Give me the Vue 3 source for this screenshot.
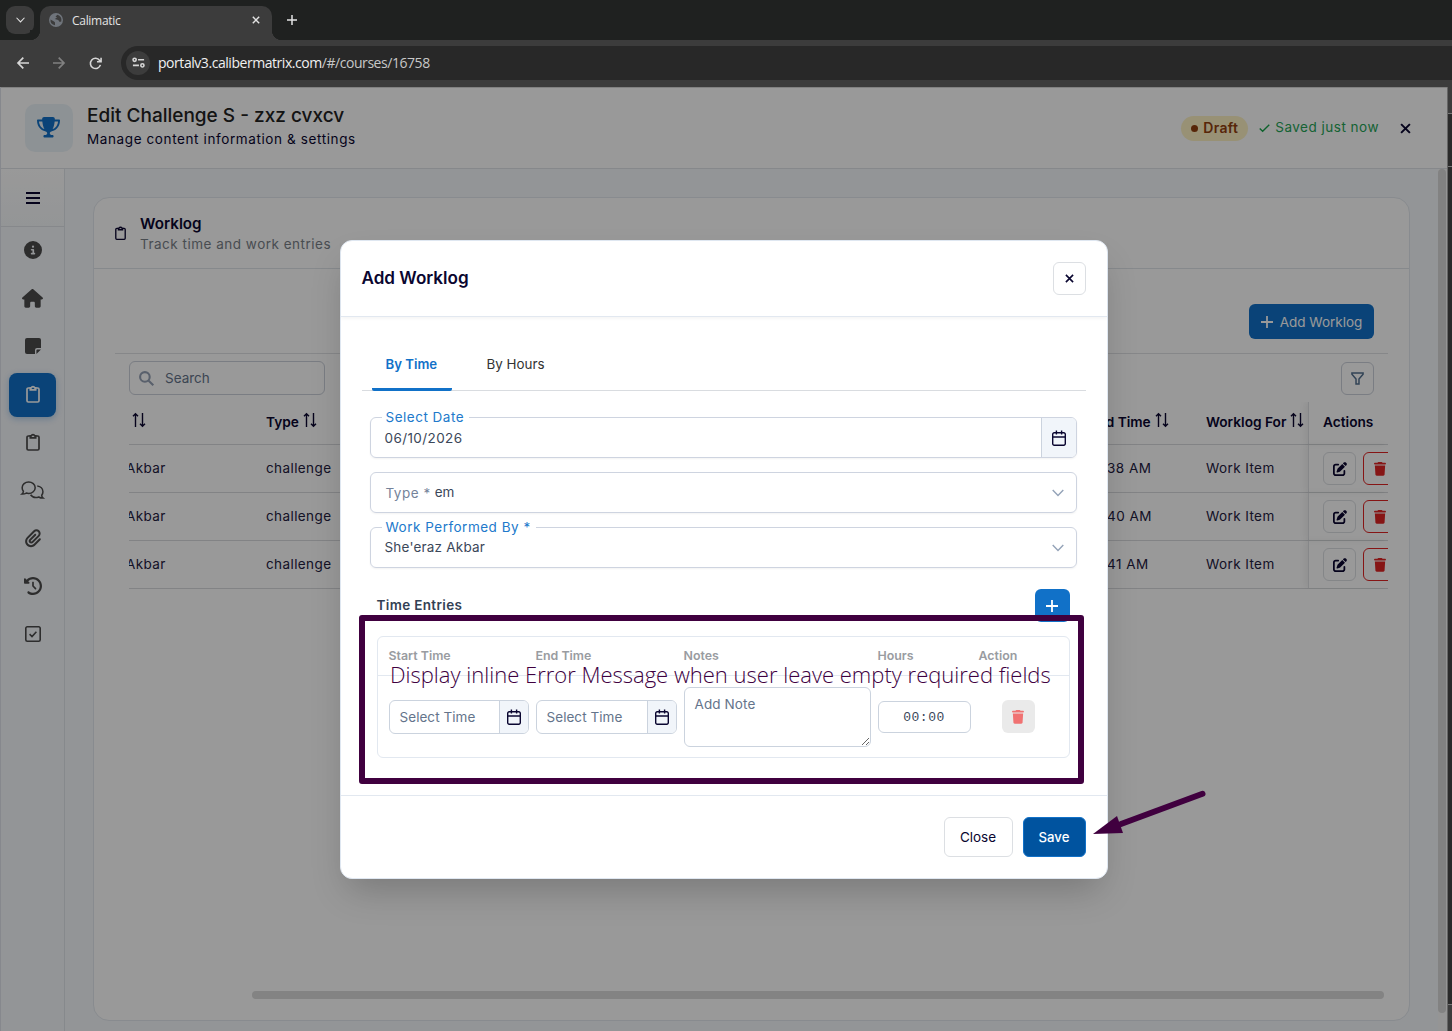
<script setup>
import { h, ref } from "vue";

// each icon: viewBox, path, optional stroke width (filled when missing)
const icons = {
  trophy: ["0 0 576 512", "M400 0H176c-26.5 0-48.1 21.8-47.1 48.2.2 5.3.4 10.6.7 15.8H24C10.7 64 0 74.7 0 88c0 92.6 33.5 157 78.5 200.7 44.3 43.1 98.3 64.8 138.1 75.8 23.4 6.5 39.4 26 39.4 45.6 0 20.9-17 37.9-37.9 37.9H192c-17.7 0-32 14.3-32 32s14.3 32 32 32H384c17.7 0 32-14.3 32-32s-14.3-32-32-32H357.9C337 448 320 431 320 410.1c0-19.6 15.9-39.2 39.4-45.6 39.9-11 93.9-32.7 138.2-75.8C542.5 245 576 180.6 576 88c0-13.3-10.7-24-24-24H446.4c.3-5.2.5-10.4.7-15.8C448.1 21.8 426.5 0 400 0zM48.9 112h84.4c9.1 90.1 29.2 150.3 51.9 190.6-24.9-11-50.8-26.5-73.2-48.3-32-31.1-58-76-63-142.3zM464.1 254.3c-22.4 21.8-48.3 37.3-73.2 48.3 22.7-40.3 42.8-100.5 51.9-190.6h84.4c-5.1 66.3-31.1 111.2-63 142.3z"],
  info: ["0 0 512 512", "M256 512A256 256 0 1 0 256 0a256 256 0 1 0 0 512zM216 336h24V272H216c-13.3 0-24-10.7-24-24s10.7-24 24-24h48c13.3 0 24 10.7 24 24v88h8c13.3 0 24 10.7 24 24s-10.7 24-24 24H216c-13.3 0-24-10.7-24-24s10.7-24 24-24zm40-208a32 32 0 1 1 0 64 32 32 0 1 1 0-64z"],
  home: ["0 0 576 512", "M575.8 255.5c0 18-15 32.1-32 32.1h-32l.7 160.2c0 2.7-.2 5.4-.5 8.1V472c0 22.1-17.9 40-40 40H392c-22.1 0-40-17.9-40-40V384c0-17.7-14.3-32-32-32H256c-17.7 0-32 14.3-32 32v88c0 22.1-17.9 40-40 40H104c-22.1 0-40-17.9-40-40V287.6H32c-18 0-32-14-32-32.1 0-9 3-17 10-24L266.4 8c7-7 15-8 22-8s15 2 21 7L564.8 231.5c8 7 12 15 11 24z"],
  note: ["0 0 16 16", "M2 0h12a2 2 0 0 1 2 2v8h-4a2 2 0 0 0-2 2v4H2a2 2 0 0 1-2-2V2a2 2 0 0 1 2-2zM16 11.4 11.4 16v-3.6a1 1 0 0 1 1-1z"],
  clipboard: ["0 0 14 18", "M4 3H2.3A1.3 1.3 0 0 0 1 4.3v11.4A1.3 1.3 0 0 0 2.3 17h9.4a1.3 1.3 0 0 0 1.3-1.3V4.3A1.3 1.3 0 0 0 11.7 3H10M4.3 2.8h1a1.8 1.8 0 0 1 3.4 0h1v2H4.3z", 1.7],
  chat: ["0 0 24 19", "M1 13.6c1-.8 1.5-1.8 1.5-2.9A6 6 0 0 1 1.2 7C1.2 3.7 4.3 1 8 1s6.8 2.7 6.8 6S11.7 13 8 13c-.9 0-1.7-.1-2.5-.4-1.3.8-2.8 1.1-4.500 1zM17 5.300c3.300.3 5.900 2.800 5.900 5.900 0 1.400-.5 2.600-1.300 3.600 0 1.200.5 2.200 1.500 3-1.700.1-3.200-.3-4.600-1.100-3.300 1.100-6.900 0-8.500-2.300", 1.6],
  clip: ["0 0 448 512", "M364.2 83.8c-24.4-24.4-64-24.4-88.4 0l-184 184c-42.1 42.1-42.1 110.3 0 152.4s110.3 42.1 152.4 0l152-152c10.9-10.9 28.7-10.9 39.6 0s10.9 28.7 0 39.6l-152 152c-64 64-167.6 64-231.6 0s-64-167.6 0-231.6l184-184c46.3-46.3 121.3-46.3 167.6 0s46.3 121.3 0 167.6l-176 176c-28.6 28.6-75 28.6-103.6 0s-28.6-75 0-103.6l144-144c10.9-10.9 28.7-10.9 39.6 0s10.9 28.7 0 39.6l-144 144c-6.7 6.7-6.7 17.7 0 24.4s17.7 6.7 24.4 0l176-176c24.4-24.4 24.4-64 0-88.4z"],
  history: ["0 0 512 512", "M75 75L41 41C25.9 25.9 0 36.6 0 57.9V168c0 13.3 10.7 24 24 24H134.1c21.4 0 32.1-25.9 17-41l-30.8-30.8C155 85.5 203 64 256 64c106 0 192 86 192 192s-86 192-192 192c-40.8 0-78.6-12.7-109.7-34.4-14.5-10.1-34.4-6.6-44.6 7.9s-6.6 34.4 7.9 44.6C151.2 495 201.7 512 256 512c141.4 0 256-114.6 256-256S397.4 0 256 0C185.3 0 121.3 28.7 75 75zm181 53c-13.3 0-24 10.7-24 24V256c0 6.4 2.5 12.5 7 17l72 72c9.4 9.4 24.6 9.4 33.9 0s9.4-24.6 0-33.9l-65-65V152c0-13.3-10.7-24-24-24z"],
  check: ["0 0 16 16", "M2.3.8h11.4a1.5 1.5 0 0 1 1.5 1.5v11.4a1.5 1.5 0 0 1-1.5 1.5H2.3a1.5 1.5 0 0 1-1.5-1.5V2.3A1.5 1.5 0 0 1 2.3.8zM4.6 8.2 7 10.5l4.4-4.7", 1.6],
  trash: ["0 0 448 512", "M135.2 17.7L128 32H32C14.3 32 0 46.3 0 64S14.3 96 32 96H416c17.7 0 32-14.3 32-32s-14.3-32-32-32H320l-7.2-14.3C307.4 6.8 296.3 0 284.2 0H163.8c-12.1 0-23.2 6.8-28.6 17.7zM416 128H32L53.2 467c1.6 25.3 22.6 45 47.9 45H346.9c25.3 0 46.3-19.7 47.9-45L416 128z"],
  edit: ["0 0 512 512", "M471.6 21.7c-21.9-21.9-57.3-21.9-79.2 0L362.3 51.7l97.9 97.9 30.1-30.1c21.9-21.9 21.9-57.3 0-79.2L471.6 21.7zm-299.2 220c-6.1 6.1-10.8 13.6-13.5 21.9l-29.6 88.8c-2.9 8.6-.6 18.1 5.8 24.6s15.9 8.7 24.6 5.8l88.8-29.6c8.2-2.7 15.7-7.4 21.9-13.5L437.7 172.3 339.7 74.3 172.4 241.7zM96 64C43 64 0 107 0 160V416c0 53 43 96 96 96H352c53 0 96-43 96-96V320c0-17.7-14.3-32-32-32s-32 14.3-32 32v96c0 17.7-14.3 32-32 32H96c-17.7 0-32-14.3-32-32V160c0-17.7 14.3-32 32-32h96c17.7 0 32-14.3 32-32s-14.3-32-32-32H96z"],
  calendar: ["0 0 14 16", "M2.2 2.7h9.6A1.5 1.5 0 0 1 13.3 4.2v9.6a1.5 1.5 0 0 1-1.5 1.5H2.2a1.5 1.5 0 0 1-1.5-1.5V4.2a1.5 1.5 0 0 1 1.5-1.5zM.7 7h12.6M4.4.5v4M9.6.5v4", 1.4],
  sort: ["0 0 14 14", "M3.5 14V.8M1 3.2 3.5.7 6 3.2M10.5 0v13.2M8 10.8l2.5 2.5 2.5-2.5", 1.4],
  down: ["0 0 12 8", "M.7 1 6 6.6 11.3 1", 1.4],
  close: ["0 0 10 10", "M1 1l8 8M9 1 1 9", 1.8],
  plus: ["0 0 12 12", "M6 0v12M0 6h12", 1.8],
  search: ["0 0 15 15", "M10.7 5.9a4.8 4.8 0 1 1-9.6 0 4.8 4.8 0 0 1 9.6 0zM9.4 9.4 14.3 14.3", 2.1],
  filter: ["0 0 14 14", "M1 1h12v1.4L8.6 7.6V13H5.4V7.6L1 2.4z", 1.6],
  menu: ["0 0 14 12", "M0 1h14M0 6h14M0 11h14", 2],
  tick: ["0 0 12 9", "M.8 4.8 4 8 11.2.8", 1.5],
  back: ["0 0 12 12", "M12 6H1M6.3.7 1 6l5.3 5.3", 1.7],
  forward: ["0 0 12 12", "M0 6h11M5.7.7 11 6l-5.3 5.3", 1.7],
  reload: ["0 0 14 14", "M12.3 8.5A5.5 5.5 0 1 1 11.5 3.7L13 5.2M13 .8v4.4H8.6", 1.7],
  tune: ["0 0 14 12", "M4.5 3a1.7 1.7 0 1 1-3.4 0 1.7 1.7 0 0 1 3.4 0zM6.5 3H13M12.9 9a1.7 1.7 0 1 1-3.4 0 1.7 1.7 0 0 1 3.4 0zM1 9h6.5", 1.7],
  globe: ["0 0 14 14", "M7 0a7 7 0 1 0 0 14A7 7 0 0 0 7 0zM1.5 6.5 5 8.5l1 1v2.8A5.5 5.5 0 0 1 1.5 6.5zM8.5 1.8l-2 1.7 1.5 1L5.8 6l3.4 1 1.5 2 1.6-.5A5.5 5.5 0 0 0 8.5 1.8z"],
};

const Icon = (props) => {
  const [viewBox, d, stroke] = icons[props.name];
  return h("svg", { viewBox, class: "icon" }, [
    h("path", {
      d,
      fill: stroke ? "none" : "currentColor",
      "fill-rule": "evenodd",
      stroke: stroke ? "currentColor" : "none",
      "stroke-width": stroke,
    }),
  ]);
};
Icon.props = ["name"];

const menu = ["info", "home", "note", "clipboard", "clipboard", "chat", "clip", "history", "check"];
const active = ref(3);
const tab = ref("By Time");
const times = ["38 AM", "40 AM", "41 AM"];
</script>

<template>
  <div class="window">
    <div class="tabstrip">
      <span class="tab_search"><Icon name="down" /></span>
      <div class="tab">
        <Icon name="globe" class="globe" />
        <span>Calimatic</span>
        <Icon name="close" class="tab_close" />
      </div>
      <Icon name="plus" class="tab_new" />
    </div>
    <div class="toolbar">
      <Icon name="back" class="nav" />
      <Icon name="forward" class="nav dim" />
      <Icon name="reload" class="nav reload" />
      <div class="omnibox">
        <span class="tune"><Icon name="tune" /></span>
        <span class="url">portalv3.calibermatrix.com<i>/#/courses/16758</i></span>
      </div>
    </div>

    <div class="viewport">
      <div class="page">
        <header>
          <span class="trophy"><Icon name="trophy" /></span>
          <div class="heading">
            <h1>Edit Challenge S - zxz cvxcv</h1>
            <p>Manage content information &amp; settings</p>
          </div>
          <span class="draft"><b></b>Draft</span>
          <Icon name="tick" class="tick" />
          <span class="saved">Saved just now</span>
          <Icon name="close" class="header_close" />
        </header>

        <div class="content">
          <nav>
            <div class="burger"><Icon name="menu" /></div>
            <div v-for="(name, i) in menu" :key="i" class="item" :class="{ active: i === active }" @click="active = i">
              <Icon :name="name" :class="name" />
            </div>
          </nav>

          <main>
            <section class="card">
              <div class="card_head">
                <Icon name="clipboard" />
                <div>
                  <h2>Worklog</h2>
                  <p>Track time and work entries</p>
                </div>
              </div>
              <div class="card_actions">
                <button class="btn_add"><Icon name="plus" />Add Worklog</button>
              </div>
              <div class="filters">
                <div class="search"><Icon name="search" />Search</div>
                <button class="btn_filter"><Icon name="filter" /></button>
              </div>
              <div class="grid">
                <div class="row head">
                  <span class="first"><Icon name="sort" /></span>
                  <span>Type<Icon name="sort" /></span>
                  <span>End Time<Icon name="sort" /></span>
                  <span>Worklog For<Icon name="sort" /></span>
                  <span class="sticky">Actions</span>
                </div>
                <div class="row" v-for="time in times" :key="time">
                  <span class="name">Akbar</span>
                  <span>challenge</span>
                  <span class="time">{{ time }}</span>
                  <span>Work Item</span>
                  <span class="sticky">
                    <button class="btn_row"><Icon name="edit" /></button>
                    <button class="btn_row delete"><Icon name="trash" /></button>
                  </span>
                </div>
              </div>
              <div class="hscroll"></div>
            </section>
          </main>
          <div class="vscroll"><span></span></div>
        </div>

        <div class="overlay">
          <div class="modal">
            <div class="modal_head">
              <h3>Add Worklog</h3>
              <button class="btn_close"><Icon name="close" /></button>
            </div>
            <div class="tabs">
              <span v-for="name in ['By Time', 'By Hours']" :key="name" :class="{ selected: tab === name }" @click="tab = name">{{ name }}</span>
            </div>
            <div class="fields">
              <div class="field">
                <label>Select Date</label>
                <span class="value">06/10/2026</span>
                <span class="addon"><Icon name="calendar" /></span>
              </div>
              <div class="field select">
                <span class="inner_label">Type *</span><span class="cut">em</span>
                <Icon name="down" />
              </div>
              <div class="field select">
                <label>Work Performed By *</label>
                <span class="value person">She'eraz Akbar</span>
                <Icon name="down" />
              </div>
            </div>
            <div class="entries_head">
              <h4>Time Entries</h4>
              <button><Icon name="plus" /></button>
            </div>
            <div class="entries">
              <div class="cols titles">
                <span>Start Time</span><span>End Time</span><span>Notes</span><span>Hours</span><span>Action</span>
              </div>
              <div class="cols inputs">
                <div v-for="n in 2" :key="n" class="time_input">
                  <span>Select Time</span>
                  <b><Icon name="calendar" /></b>
                </div>
                <textarea placeholder="Add Note"></textarea>
                <div class="hours">00:00</div>
                <button class="btn_trash"><Icon name="trash" /></button>
              </div>
            </div>
            <div class="modal_foot">
              <button>Close</button>
              <button class="save">Save</button>
            </div>
          </div>
        </div>
      </div>
      <div class="edge"><i></i><i></i><i></i><i></i></div>
    </div>

    <!-- review marks drawn over the dialog -->
    <div class="mark_box"></div>
    <div class="mark_text">Display inline Error Message when user leave empty required fields</div>
    <svg class="mark_arrow" viewBox="0 0 116 46">
      <path d="M111.5 5.8 30 36" stroke="#40003f" stroke-width="6" stroke-linecap="round" />
      <path d="M2 46 26 28l6 17z" fill="#40003f" />
    </svg>
  </div>
</template>

<style>
body {
  margin: 0;
  overflow: hidden;
}
</style>

<style scoped>
* {
  box-sizing: border-box;
  margin: 0;
}

.window {
  position: relative;
  display: flex;
  flex-direction: column;
  width: 1452px;
  height: 1031px;
  overflow: hidden;
  font-family: Inter, "Open Sans", sans-serif;
  font-size: 13.5px;
  letter-spacing: 0.4px;
  line-height: 18px;
  color: #0a0630;
}

button {
  display: flex;
  align-items: center;
  justify-content: center;
  padding: 0;
  font: inherit;
  letter-spacing: 0;
  color: inherit;
  background: none;
  border: 1px solid #dcdfe3;
  border-radius: 6px;
}

.icon {
  display: block;
  flex: none;
  overflow: visible;
}

/* browser */
.tabstrip {
  display: flex;
  align-items: center;
  height: 40px;
  padding-left: 6px;
  background: #1f2120;
  color: #e3e3e3;
  font: 12px "Open Sans", sans-serif;
  letter-spacing: -0.3px;
}

.tab_search {
  display: grid;
  place-items: center;
  width: 28px;
  height: 28px;
  border-radius: 9px;
  background: #3c3c3c;
}

.tab_search .icon {
  width: 9px;
  stroke: #e3e3e3;
  stroke-width: 1;
}

.tab {
  position: relative;
  display: flex;
  align-items: center;
  align-self: flex-end;
  width: 232px;
  height: 34px;
  margin-left: 6px;
  padding: 0 12px 6px 9px;
  border-radius: 10px 10px 0 0;
  background: #3c3c3c;
}

.tab::before,
.tab::after {
  content: "";
  position: absolute;
  bottom: 0;
  left: -10px;
  width: 10px;
  height: 10px;
  background: radial-gradient(circle at 0 0, #1f2120 10px, #3c3c3c 10.5px);
}

.tab::after {
  left: auto;
  right: -10px;
  background: radial-gradient(circle at 100% 0, #1f2120 10px, #3c3c3c 10.5px);
}

.globe {
  width: 14px;
  margin-right: 9px;
  color: #6f747b;
}

.tab_close {
  width: 8px;
  margin-left: auto;
}

.tab_new {
  width: 10px;
  margin-left: 15px;
}

.toolbar {
  display: flex;
  align-items: center;
  height: 47px;
  padding-left: 17px;
  padding-bottom: 1px;
  background: #3c3c3c;
  color: #d6d6d6;
}

.nav {
  width: 12px;
  margin-right: 24px;
}

.dim {
  color: #808080;
}

.reload {
  width: 13px;
  margin-right: 19px;
}

.omnibox {
  display: flex;
  align-items: center;
  flex: 1;
  height: 34px;
  padding-left: 5px;
  border-radius: 17px 0 0 17px;
  background: #282828;
}

.tune {
  display: grid;
  place-items: center;
  width: 24px;
  height: 24px;
  margin-right: 8px;
  border-radius: 50%;
  background: #3c3c3c;
}

.tune .icon {
  width: 13px;
}

.url {
  padding-bottom: 1px;
  font: 14px "Open Sans", sans-serif;
  letter-spacing: -0.45px;
  color: #f0f0f0;
}

.url i {
  font-style: normal;
  color: #c7c7c7;
}

/* page */
.viewport {
  display: flex;
  flex: 1;
  min-height: 0;
}

.page {
  position: relative;
  display: flex;
  flex: none;
  flex-direction: column;
  width: 1447px;
  border-left: 1px solid #dfe3ec;
  background: #fff;
}

.edge {
  display: flex;
  flex-direction: column;
  flex: 1;
  background: #2a2a2a;
  border-left: 1px solid #666;
}

.edge i {
  flex: none;
  height: 53px;
  border-bottom: 1px solid #777;
}

.edge i:first-child {
  height: 27px;
  background: #3c3c3c;
}

.edge i:nth-child(3) {
  height: 838px;
}

.edge i:last-child {
  flex: 1;
  border: 0;
  background: #3c3c3c;
}

header {
  display: flex;
  align-items: center;
  height: 82px;
  padding: 0 36px 0 24px;
  border-top: 1px solid #d8d8d8;
  border-bottom: 1px solid #dfe3e8;
}

.trophy {
  display: grid;
  place-items: center;
  width: 48px;
  height: 48px;
  margin-right: 14px;
  padding: 0 1px 2px 0;
  border-radius: 10px;
  background: #ecf4f9;
  color: #1171c8;
}

.trophy .icon {
  width: 23px;
}

.heading {
  flex: 1;
  padding-bottom: 4px;
}

h1 {
  font-size: 19px;
  font-weight: 500;
  line-height: 26px;
  letter-spacing: 0;
  color: #222;
}

.heading p {
  line-height: 20px;
  letter-spacing: 0.61px;
}

.draft {
  display: flex;
  align-items: center;
  gap: 5px;
  height: 25px;
  padding: 0 10px 0 10px;
  border-radius: 13px;
  background: #fdf2c4;
  color: #92400e;
  font-size: 14px;
  font-weight: 600;
  letter-spacing: 0.3px;
}

.draft b {
  width: 7px;
  height: 7px;
  border-radius: 50%;
  background: currentColor;
}

.tick {
  width: 11px;
  margin: 0 5px 0 11px;
  color: #16a34a;
}

.saved {
  padding-bottom: 2px;
  letter-spacing: 0.5px;
  color: #25a557;
}

.header_close {
  width: 11px;
  margin-left: 21px;
}

.content {
  display: flex;
  flex: 1;
  min-height: 0;
  background: #f5f8fc;
}

nav {
  flex: none;
  width: 64px;
  border-right: 1px solid #e0e4e9;
}

.burger {
  display: grid;
  place-items: center;
  height: 58px;
  margin-bottom: 2px;
  border-bottom: 1px solid #dfe3e8;
  background: linear-gradient(#fff, #f6f9fb);
}

.burger .icon {
  width: 14px;
}

.item {
  display: grid;
  place-items: center;
  width: 47px;
  height: 44px;
  margin: 0 8px 4px;
  padding-bottom: 2px;
  border-radius: 8px;
  color: #4b4b4b;
}

.item .icon {
  width: 18px;
}

.item .home {
  width: 21px;
}

.item .note,
.item .check,
.item .clip {
  width: 16px;
}

.item .clipboard {
  width: 14px;
}

.item .chat {
  width: 23px;
}

.item.active {
  background: #1171c8;
  color: #fff;
  box-shadow: 0 2px 6px rgba(17, 113, 200, 0.3);
}

main {
  flex: 1;
  min-width: 0;
  padding: 28px 28px 11px;
}

.card {
  height: 824px;
  border: 1px solid #e3e8ee;
  border-radius: 16px;
  background: #fff;
}

.card_head {
  display: flex;
  align-items: center;
  gap: 14px;
  height: 71px;
  padding: 0 20px 0 21px;
  border-bottom: 1px solid #e0e4e9;
}

.card_head .icon {
  width: 11px;
}

h2 {
  font-size: 15.2px;
  font-weight: 600;
  line-height: 22px;
  letter-spacing: 0;
}

.card_head p {
  line-height: 19px;
  letter-spacing: 0.5px;
  color: #797f88;
}

.card_actions {
  display: flex;
  justify-content: flex-end;
  height: 85px;
  margin: 0 21px;
  padding: 35px 14px 0 0;
  border-bottom: 1px solid #dfe1e4;
}

.btn_add {
  gap: 7px;
  width: 125px;
  height: 35px;
  border: 0;
  background: #1171c8;
  color: #fff;
}

.btn_add .icon {
  width: 12px;
}

.filters {
  display: flex;
  justify-content: space-between;
  align-items: center;
  height: 48px;
  padding: 0 35px;
}

.search {
  display: flex;
  align-items: center;
  gap: 11px;
  width: 196px;
  height: 34px;
  padding-left: 9px;
  border: 1px solid #cbd0da;
  border-radius: 6px;
  letter-spacing: 0;
  color: #64748b;
}

.search .icon {
  width: 15px;
  color: #94a0b4;
}

.btn_filter {
  width: 33px;
  height: 33px;
  border-color: #cbd0da;
  color: #53708f;
}

.btn_filter .icon {
  width: 13px;
}

.grid {
  margin: 0 21px 0 35px;
  overflow: hidden;
}

.row {
  display: grid;
  grid-template-columns: 137px 823px 117px 102px minmax(0, 1fr);
  align-items: center;
  height: 48px;
  border-bottom: 1px solid #d9dbde;
  white-space: nowrap;
}

.row > span {
  padding-bottom: 2px;
  color: #24203f;
}

.row.head {
  height: 43px;
  font-weight: 600;
  letter-spacing: 0;
}

.row.head > span {
  display: flex;
  align-items: center;
  gap: 4px;
  font-size: 13.7px;
  color: #0a0630;
}

.row.head .icon {
  width: 14px;
  margin-bottom: 4px;
}

.row .first {
  padding-left: 3px;
}

.row .name {
  margin-left: -3px;
}

.row .time {
  padding-left: 18px;
  letter-spacing: 0.5px;
}

.row .sticky {
  display: flex;
  align-items: center;
  gap: 7px;
  height: 100%;
  padding: 0 0 0 14px;
  border-left: 1px solid #dfe1e5;
  box-shadow: -3px 0 6px rgba(0, 0, 0, 0.06);
}

.row.head .sticky {
  padding-bottom: 2px;
}

.btn_row {
  flex: none;
  width: 33px;
  height: 33px;
  color: #0a0630;
}

.btn_row .icon {
  width: 14px;
}

.btn_row.delete {
  border-color: #e02424;
  color: #e02424;
}

.btn_row.delete .icon {
  width: 12px;
}

.hscroll {
  height: 8px;
  margin: 402px 25px 0 158px;
  border-radius: 4px;
  background: #dadada;
}

.vscroll {
  flex: none;
  width: 9px;
  background: #f9f9f9;
}

.vscroll span {
  display: block;
  width: 8px;
  height: 844px;
  border-radius: 4px;
  background: #d9d9d9;
}

/* dialog */
.overlay {
  position: absolute;
  inset: 0 0 0 -1px;
  display: flex;
  justify-content: center;
  padding-top: 153px;
  background: rgba(0, 0, 0, 0.4);
}

.modal {
  display: flex;
  flex-direction: column;
  width: 768px;
  height: 639px;
  border: 1px solid #dfe7f1;
  border-radius: 12px;
  background: #fff;
  box-shadow: 0 18px 36px -8px rgba(0, 0, 0, 0.22);
}

.modal_head {
  display: flex;
  flex: none;
  align-items: center;
  justify-content: space-between;
  height: 76px;
  padding: 0 21px;
  border-bottom: 1px solid #e2e8f0;
  box-shadow: 0 2px 3px rgba(0, 0, 0, 0.04);
}

h3 {
  padding-bottom: 2px;
  font-size: 17.1px;
  font-weight: 600;
  letter-spacing: 0;
}

.btn_close {
  width: 33px;
  height: 33px;
}

.btn_close .icon {
  width: 9px;
}

.tabs {
  display: flex;
  flex: none;
  height: 74px;
  margin: 0 21px;
  padding: 21px 0 0 10px;
  border-bottom: 1px solid #d9dce0;
  color: #333;
  letter-spacing: 0;
  font-size: 13.4px;
  white-space: nowrap;
}

.tabs span {
  height: 53px;
  margin-right: 20px;
  padding: 17px 15px 0;
}

.tabs .selected {
  width: 80px;
  padding: 17px 0 0 14px;
  border-bottom: 3px solid #1171c8;
  border-radius: 2px;
  color: #1171c8;
  font-size: 13.2px;
  font-weight: 600;
}

.fields {
  display: flex;
  flex-direction: column;
  gap: 14px;
  padding: 26px 30px 0 29px;
}

.field {
  position: relative;
  display: flex;
  align-items: center;
  height: 41px;
  padding-left: 14px;
  border: 1px solid #ced4e0;
  border-radius: 6px;
  box-shadow: 0 1px 2px rgba(0, 0, 0, 0.05);
  color: #3b4759;
}

.field label {
  position: absolute;
  top: -10px;
  left: 11px;
  padding: 0 5px 0 4px;
  background: #fff;
  letter-spacing: 0.5px;
  color: #2179cb;
}

.value {
  flex: 1;
}

.person {
  padding-bottom: 2px;
  letter-spacing: 0.2px;
}

.addon {
  display: grid;
  place-items: center;
  width: 35px;
  height: 39px;
  border-left: 1px solid #cbd3de;
  border-radius: 0 5px 5px 0;
  background: #f1f5fa;
  color: #0a0630;
}

.addon .icon {
  width: 14px;
}

.inner_label {
  padding-left: 1px;
  letter-spacing: 0.5px;
  color: #75839a;
}

.cut {
  flex: 1;
  padding: 0 0 1px 4px;
  letter-spacing: 0;
}

.select > .icon {
  width: 12px;
  margin-right: 12px;
  color: #94a3b8;
}

.entries_head {
  display: flex;
  flex: none;
  justify-content: space-between;
  align-items: center;
  height: 33px;
  margin: 21px 37px 14px 36px;
}

h4 {
  padding-bottom: 1px;
  font-size: 13.5px;
  font-weight: 600;
  letter-spacing: 0.35px;
  color: #334155;
}

.entries_head button {
  width: 35px;
  height: 33px;
  border: 0;
  background: #1171c8;
  color: #fff;
}

.entries_head .icon {
  width: 12px;
}

.entries {
  flex: none;
  height: 122px;
  margin: 0 37px 37px 36px;
  border: 1px solid #e2e8f0;
  border-radius: 6px;
}

.cols {
  display: grid;
  grid-template-columns: 147px 148px 194px 101px 1fr;
  padding-left: 11px;
}

.titles {
  height: 39px;
  align-items: center;
  border-bottom: 1px solid #e2e8f0;
  font-size: 12.4px;
  font-weight: 600;
  letter-spacing: 0;
  color: #999ca1;
}

.inputs {
  height: 81px;
  align-items: center;
}

.time_input {
  display: flex;
  align-items: center;
  width: 140px;
  height: 34px;
  border: 1px solid #cbd3de;
  border-radius: 6px;
  letter-spacing: 0.05px;
  color: #64748b;
}

.time_input + .time_input {
  width: 141px;
}

.time_input span {
  flex: 1;
  padding-left: 10px;
}

.time_input b {
  display: grid;
  place-items: center;
  width: 29px;
  height: 32px;
  border-left: 1px solid #cbd3de;
  border-radius: 0 5px 5px 0;
  background: #f1f5fa;
  color: #0a0630;
}

.time_input .icon {
  width: 14px;
}

textarea {
  display: block;
  width: 187px;
  height: 60px;
  padding: 7px 10px;
  border: 1px solid #cbd3de;
  border-radius: 6px;
  font: inherit;
  letter-spacing: 0.1px;
  resize: vertical;
}

textarea::placeholder {
  color: #64748b;
}

.hours {
  width: 93px;
  height: 32px;
  border: 1px solid #cbd3de;
  border-radius: 6px;
  font: 13px/31px "Liberation Mono", monospace;
  letter-spacing: 0.5px;
  text-align: center;
  color: #3b4759;
}

.btn_trash {
  width: 33px;
  height: 33px;
  margin-left: 23px;
  border: 0;
  background: #eaeaea;
  color: #f07272;
}

.btn_trash .icon {
  width: 12px;
}

.modal_foot {
  display: flex;
  justify-content: flex-end;
  gap: 10px;
  height: 84px;
  padding: 21px 21px 0;
  border-top: 1px solid #e2e8f0;
}

.modal_foot button {
  width: 69px;
  height: 40px;
}

.modal_foot .save {
  width: 63px;
  border-color: #1171c8;
  background: #00539f;
  color: #fff;
  font-weight: 500;
  font-size: 13.2px;
}

/* review marks */
.mark_box {
  position: absolute;
  left: 359px;
  top: 615px;
  width: 725px;
  height: 169px;
  border: 6px solid #40003f;
  border-radius: 3px;
}

.mark_text {
  position: absolute;
  left: 390px;
  top: 659px;
  font: 300 22px/30px "Open Sans", sans-serif;
  letter-spacing: 0;
  white-space: nowrap;
  color: #40003f;
}

.mark_arrow {
  position: absolute;
  left: 1091px;
  top: 788px;
  width: 116px;
  height: 46px;
  overflow: visible;
}
</style>
